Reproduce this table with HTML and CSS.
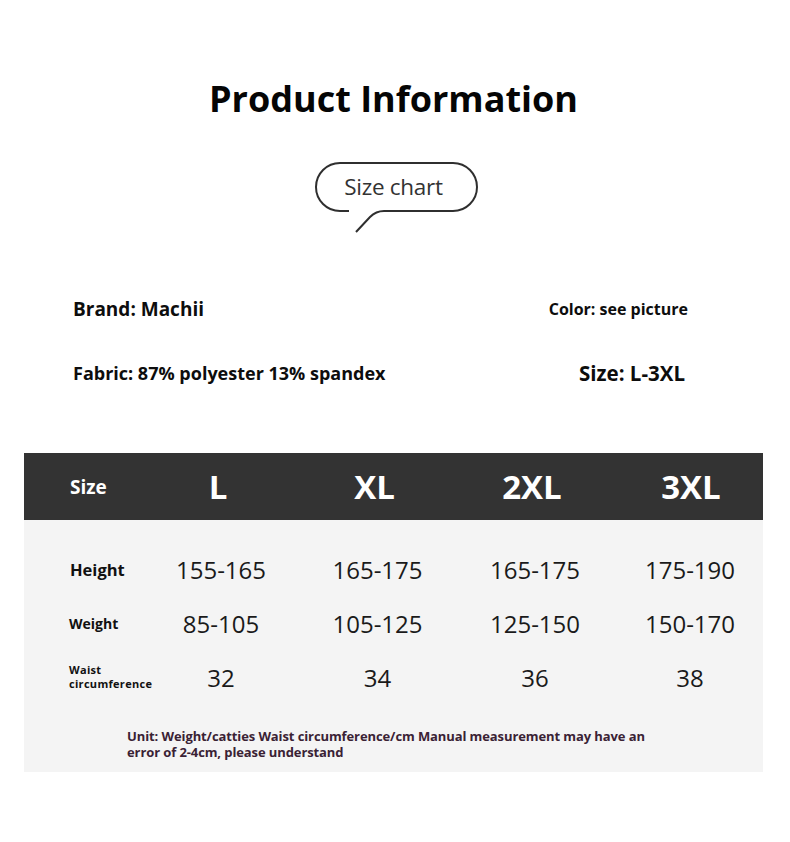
FILE: index.html
```html
<!DOCTYPE html>
<html>
<head>
<meta charset="utf-8">
<link rel="stylesheet" href="styles.css">
</head>
<body>
<div class="page">
  <h1 class="title">Product Information</h1>
  <div class="bubble-wrap">
    <div class="bubble">
      <svg class="bubble-svg" width="166" height="76" viewBox="0 0 166 76">
        <path d="M35 50 L26 50 A24 24 0 0 1 26 2 L139 2 A24 24 0 0 1 139 50 L70 50 Q62 50 56 56 L42 71" fill="none" stroke="#2f2f2f" stroke-width="2"/>
      </svg>
      <span class="bubble-text">Size chart</span>
    </div>
  </div>
  <div class="info">
    <div class="info-row">
      <span class="info-item brand">Brand: Machii</span>
      <span class="info-item color">Color: see picture</span>
    </div>
    <div class="info-row">
      <span class="info-item fabric">Fabric: 87% polyester 13% spandex</span>
      <span class="info-item size">Size: L-3XL</span>
    </div>
  </div>
  <div class="chart">
    <div class="chart-head">
      <div class="head-label">Size</div>
      <div class="head-cell">L</div>
      <div class="head-cell">XL</div>
      <div class="head-cell">2XL</div>
      <div class="head-cell">3XL</div>
    </div>
    <div class="chart-body">
      <div class="row">
        <div class="row-label l-height">Height</div>
        <div class="cell">155-165</div>
        <div class="cell">165-175</div>
        <div class="cell">165-175</div>
        <div class="cell">175-190</div>
      </div>
      <div class="row">
        <div class="row-label l-weight">Weight</div>
        <div class="cell">85-105</div>
        <div class="cell">105-125</div>
        <div class="cell">125-150</div>
        <div class="cell">150-170</div>
      </div>
      <div class="row">
        <div class="row-label l-waist">Waist<br>circumference</div>
        <div class="cell">32</div>
        <div class="cell">34</div>
        <div class="cell">36</div>
        <div class="cell">38</div>
      </div>
      <p class="note">Unit: Weight/catties Waist circumference/cm Manual measurement may have an error of 2-4cm, please understand</p>
    </div>
  </div>
</div>
</body>
</html>
```
FILE: styles.css
```css
* { box-sizing: border-box; }
html, body { margin: 0; padding: 0; background: #fff; }
body { font-family: "Open Sans", "Noto Sans", sans-serif; color: #111; }
.page { width: 790px; height: 842px; padding-top: 74px; }

.title {
  margin: 0;
  text-align: center;
  font-family: "Open Sans", sans-serif;
  font-weight: 700;
  font-size: 36px;
  line-height: 50px;
  color: #050505;
  letter-spacing: 0;
  padding-right: 3px;
}

.bubble-wrap { display: flex; justify-content: center; margin-top: 37px; padding-left: 3px; }
.bubble { position: relative; width: 166px; height: 76px; }
.bubble-svg { position: absolute; left: 0; top: 0; }
.bubble-text {
  display: block;
  position: relative;
  text-align: center;
  font-size: 22.5px;
  line-height: 52px;
  color: #333;
  font-weight: 400;
  letter-spacing: -0.3px;
  padding-right: 6px;
}

.info { margin-top: 56px; padding: 0 73px; }
.info-row { display: flex; justify-content: space-between; align-items: center; }
.info-row + .info-row { margin-top: 32px; }
.info-item { font-family: "Open Sans", sans-serif; font-weight: 700; color: #0d0d0d; line-height: 32px; letter-spacing: 0; }
.brand { font-size: 19px; }
.color { font-size: 16px; margin-right: 29px; }
.fabric { font-size: 18px; }
.size { font-size: 20.5px; margin-right: 32px; }

.chart { margin: 64px 27px 0 24px; }
.chart-head, .row {
  display: grid;
  grid-template-columns: 116px 156px 157px 158px 1fr;
  align-items: center;
}
.chart-head { background: #333333; height: 67px; }
.head-label { padding-left: 46px; color: #fff; font-weight: 700; font-size: 19px; }
.head-cell { text-align: center; color: #fff; font-weight: 700; font-size: 33px; }
.head-cell:last-child { padding-left: 8px; }
.chart-body { background: #f4f4f4; padding-top: 22px; height: 252px; }
.row { height: 54px; }
.row-label { padding-left: 46px; font-weight: 700; color: #111; }
.l-height { font-size: 16.5px; }
.l-weight { font-size: 14px; padding-left: 45px; }
.l-waist { font-size: 11px; line-height: 14px; padding-left: 45px; letter-spacing: 0.3px; }
.cell { text-align: center; font-size: 24px; color: #1a1a1a; padding-left: 6px; }
.note {
  margin: 24px 0 0 103px;
  width: 530px;
  font-weight: 700;
  font-size: 13px;
  line-height: 16px;
  letter-spacing: -0.1px;
  color: #3a2234;
}
```
